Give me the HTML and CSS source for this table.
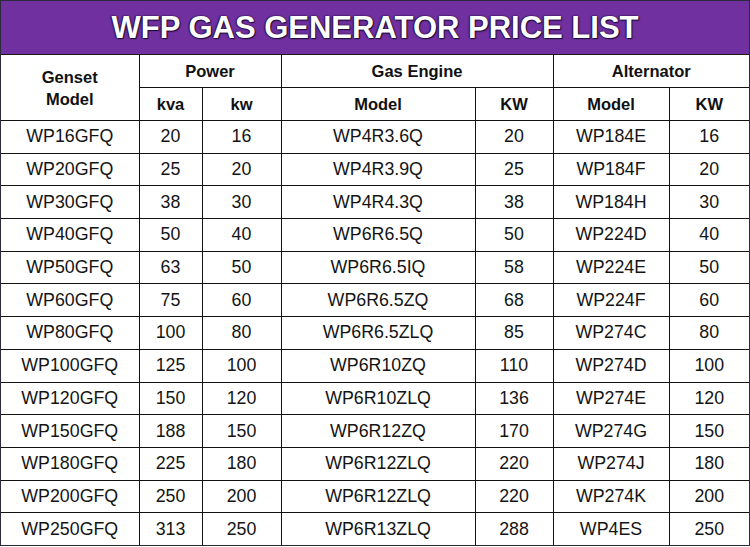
FILE: index.html
```html
<!DOCTYPE html>
<html>
<head>
<meta charset="utf-8">
<link rel="stylesheet" href="styles.css">
</head>
<body>
<div class="sheet">
  <div class="title">WFP GAS GENERATOR PRICE LIST</div>
  <table class="price">
    <colgroup>
      <col class="c1"><col class="c2"><col class="c3"><col class="c4"><col class="c5"><col class="c6"><col class="c7">
    </colgroup>
    <thead>
      <tr class="h1">
        <th rowspan="2" class="genset">Genset<br>Model</th>
        <th colspan="2">Power</th>
        <th colspan="2">Gas Engine</th>
        <th colspan="2">Alternator</th>
      </tr>
      <tr class="h2">
        <th>kva</th><th>kw</th><th>Model</th><th>KW</th><th>Model</th><th>KW</th>
      </tr>
    </thead>
    <tbody>
      <tr><td>WP16GFQ</td><td>20</td><td>16</td><td>WP4R3.6Q</td><td>20</td><td>WP184E</td><td>16</td></tr>
      <tr><td>WP20GFQ</td><td>25</td><td>20</td><td>WP4R3.9Q</td><td>25</td><td>WP184F</td><td>20</td></tr>
      <tr><td>WP30GFQ</td><td>38</td><td>30</td><td>WP4R4.3Q</td><td>38</td><td>WP184H</td><td>30</td></tr>
      <tr><td>WP40GFQ</td><td>50</td><td>40</td><td>WP6R6.5Q</td><td>50</td><td>WP224D</td><td>40</td></tr>
      <tr><td>WP50GFQ</td><td>63</td><td>50</td><td>WP6R6.5IQ</td><td>58</td><td>WP224E</td><td>50</td></tr>
      <tr><td>WP60GFQ</td><td>75</td><td>60</td><td>WP6R6.5ZQ</td><td>68</td><td>WP224F</td><td>60</td></tr>
      <tr><td>WP80GFQ</td><td>100</td><td>80</td><td>WP6R6.5ZLQ</td><td>85</td><td>WP274C</td><td>80</td></tr>
      <tr><td>WP100GFQ</td><td>125</td><td>100</td><td>WP6R10ZQ</td><td>110</td><td>WP274D</td><td>100</td></tr>
      <tr><td>WP120GFQ</td><td>150</td><td>120</td><td>WP6R10ZLQ</td><td>136</td><td>WP274E</td><td>120</td></tr>
      <tr><td>WP150GFQ</td><td>188</td><td>150</td><td>WP6R12ZQ</td><td>170</td><td>WP274G</td><td>150</td></tr>
      <tr><td>WP180GFQ</td><td>225</td><td>180</td><td>WP6R12ZLQ</td><td>220</td><td>WP274J</td><td>180</td></tr>
      <tr><td>WP200GFQ</td><td>250</td><td>200</td><td>WP6R12ZLQ</td><td>220</td><td>WP274K</td><td>200</td></tr>
      <tr><td>WP250GFQ</td><td>313</td><td>250</td><td>WP6R13ZLQ</td><td>288</td><td>WP4ES</td><td>250</td></tr>
    </tbody>
  </table>
</div>
</body>
</html>
```
FILE: styles.css
```css
html, body {
  margin: 0;
  padding: 0;
  background: #ffffff;
}
.sheet {
  width: 750px;
  height: 546px;
  box-sizing: border-box;
  border: 1px solid #2a2a3a;
  overflow: hidden;
  font-family: "Liberation Sans", Arial, sans-serif;
  display: flex;
  flex-direction: column;
}
.title {
  height: 53px;
  flex: none;
  background: #7030a0;
  color: #ffffff;
  font-weight: bold;
  font-size: 31px;
  line-height: 53px;
  text-align: center;
  text-shadow: 0 0 2px #1c0c36, 1px 1px 1px #1c0c36, -1px 0 1px #2a1250;
  border-bottom: 1px solid #1a1a1a;
}
.price {
  width: 748px;
  border-collapse: collapse;
  table-layout: fixed;
  color: #141414;
}
.c1 { width: 138px; }
.c2 { width: 63px; }
.c3 { width: 79px; }
.c4 { width: 194px; }
.c5 { width: 78px; }
.c6 { width: 116px; }
.c7 { width: 80px; }
.price th,
.price td {
  border: 1px solid #111111;
  text-align: center;
  padding: 0;
}
.price tr:first-child th { border-top: none; }
.price th:first-child,
.price td:first-child { border-left: none; }
.price th:last-child,
.price td:last-child { border-right: none; }
.price tbody tr:last-child td { border-bottom: none; }
.price th {
  font-weight: bold;
  font-size: 16.5px;
  color: #111111;
}
.h1 th { height: 32px; }
.h2 th { height: 32px; }
.genset { line-height: 22px; }
.price td {
  font-size: 17.8px;
  height: 31.7px;
}
```
